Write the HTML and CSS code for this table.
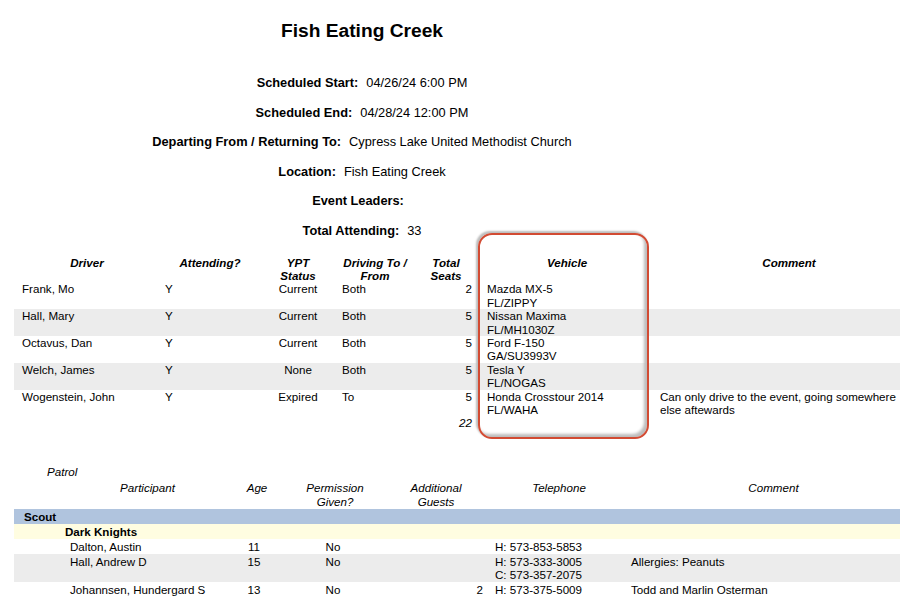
FILE: index.html
```html
<!DOCTYPE html>
<html>
<head>
<meta charset="utf-8">
<title>Fish Eating Creek</title>
<link rel="stylesheet" href="styles.css">
</head>
<body>
<div class="report">
  <h1 class="title">Fish Eating Creek</h1>
  <div class="info">
    <div class="info-row"><span class="lbl">Scheduled Start:</span><span class="val">04/26/24 6:00 PM</span></div>
    <div class="info-row"><span class="lbl">Scheduled End:</span><span class="val">04/28/24 12:00 PM</span></div>
    <div class="info-row"><span class="lbl">Departing From / Returning To:</span><span class="val">Cypress Lake United Methodist Church</span></div>
    <div class="info-row"><span class="lbl">Location:</span><span class="val">Fish Eating Creek</span></div>
    <div class="info-row"><span class="lbl">Event Leaders:</span><span class="val"></span></div>
    <div class="info-row"><span class="lbl">Total Attending:</span><span class="val">33</span></div>
  </div>

  <table class="drivers">
    <colgroup>
      <col class="d-c1"><col class="d-c2"><col class="d-c3"><col class="d-c4"><col class="d-c5"><col class="d-c6"><col class="d-c7">
    </colgroup>
    <thead>
      <tr>
        <th class="h-driver">Driver</th>
        <th>Attending?</th>
        <th>YPT<br>Status</th>
        <th>Driving To /<br>From</th>
        <th>Total<br>Seats</th>
        <th class="h-vehicle">Vehicle</th>
        <th class="h-comment">Comment</th>
      </tr>
    </thead>
    <tbody>
      <tr>
        <td class="c-name">Frank, Mo</td><td class="c-att">Y</td><td class="c-ypt">Current</td><td class="c-drv">Both</td><td class="c-seats">2</td><td class="c-veh">Mazda MX-5<br>FL/ZIPPY</td><td class="c-com"></td>
      </tr>
      <tr class="alt">
        <td class="c-name">Hall, Mary</td><td class="c-att">Y</td><td class="c-ypt">Current</td><td class="c-drv">Both</td><td class="c-seats">5</td><td class="c-veh">Nissan Maxima<br>FL/MH1030Z</td><td class="c-com"></td>
      </tr>
      <tr>
        <td class="c-name">Octavus, Dan</td><td class="c-att">Y</td><td class="c-ypt">Current</td><td class="c-drv">Both</td><td class="c-seats">5</td><td class="c-veh">Ford F-150<br>GA/SU3993V</td><td class="c-com"></td>
      </tr>
      <tr class="alt">
        <td class="c-name">Welch, James</td><td class="c-att">Y</td><td class="c-ypt">None</td><td class="c-drv">Both</td><td class="c-seats">5</td><td class="c-veh">Tesla Y<br>FL/NOGAS</td><td class="c-com"></td>
      </tr>
      <tr>
        <td class="c-name">Wogenstein, John</td><td class="c-att">Y</td><td class="c-ypt">Expired</td><td class="c-drv">To</td><td class="c-seats">5</td><td class="c-veh">Honda Crosstour 2014<br>FL/WAHA</td><td class="c-com">Can only drive to the event, going somewhere else aftewards</td>
      </tr>
      <tr class="total">
        <td></td><td></td><td></td><td></td><td class="c-seats total-num">22</td><td></td><td></td>
      </tr>
    </tbody>
  </table>

  <div class="annot"></div>

  <div class="patrol-label">Patrol</div>
  <table class="roster">
    <colgroup>
      <col class="r-c1"><col class="r-c2"><col class="r-c3"><col class="r-c4"><col class="r-c5"><col class="r-c6">
    </colgroup>
    <thead>
      <tr>
        <th class="h-part">Participant</th>
        <th>Age</th>
        <th>Permission<br>Given?</th>
        <th>Additional<br>Guests</th>
        <th>Telephone</th>
        <th class="h-rcomment">Comment</th>
      </tr>
    </thead>
    <tbody>
      <tr class="group"><td colspan="6">Scout</td></tr>
      <tr class="subgroup"><td colspan="6">Dark Knights</td></tr>
      <tr>
        <td class="r-name">Dalton, Austin</td><td class="r-age">11</td><td class="r-perm">No</td><td class="r-guests"></td><td class="r-tel">H: 573-853-5853</td><td class="r-com"></td>
      </tr>
      <tr class="alt">
        <td class="r-name">Hall, Andrew D</td><td class="r-age">15</td><td class="r-perm">No</td><td class="r-guests"></td><td class="r-tel">H: 573-333-3005<br>C: 573-357-2075</td><td class="r-com">Allergies: Peanuts</td>
      </tr>
      <tr>
        <td class="r-name">Johannsen, Hundergard S</td><td class="r-age">13</td><td class="r-perm">No</td><td class="r-guests">2</td><td class="r-tel">H: 573-375-5009</td><td class="r-com">Todd and Marlin Osterman</td>
      </tr>
    </tbody>
  </table>
</div>
</body>
</html>
```

FILE: styles.css
```css
html, body {
  margin: 0;
  padding: 0;
  background: #ffffff;
  overflow: hidden;
}

body {
  font-family: "Liberation Sans", Arial, sans-serif;
  color: #000;
  font-size: 11.6px;
}

.report {
  position: relative;
  width: 900px;
  height: 596px;
  padding-top: 20px;
  box-sizing: border-box;
}

.title {
  width: 724px;
  margin: 0;
  font-size: 19.2px;
  line-height: 22px;
  font-weight: bold;
  text-align: center;
}

.info {
  width: 724px;
  margin-top: 26px;
}

.info-row {
  height: 29.6px;
  line-height: 29.6px;
  font-size: 12.8px;
  text-align: center;
  white-space: nowrap;
}

.info-row .lbl {
  font-weight: bold;
}

.info-row .val {
  margin-left: 8px;
}

/* Drivers table */
table {
  border-collapse: collapse;
  border-spacing: 0;
  table-layout: fixed;
  margin-left: 14px;
  width: 886px;
}

td, th {
  padding: 0;
  vertical-align: top;
}

.drivers {
  margin-top: 10px;
  line-height: 13.4px;
}

.d-c1 { width: 146px; }
.d-c2 { width: 100px; }
.d-c3 { width: 76px; }
.d-c4 { width: 78px; }
.d-c5 { width: 64px; }
.d-c6 { width: 178px; }
.d-c7 { width: 244px; }

.drivers th {
  font-weight: bold;
  font-style: italic;
  text-align: center;
  height: 26.8px;
}

.drivers th.h-comment {
  padding-left: 22px;
}

.drivers tbody tr {
  height: 26.8px;
}

.drivers tbody tr.total {
  height: 13.4px;
}

.alt td {
  background: #ececec;
}

.c-name { padding-left: 8px; }
.c-att { padding-left: 5px; }
.c-ypt { text-align: center; }
.c-drv { padding-left: 6px; }
.c-seats { text-align: right; padding-right: 6px; }
.c-veh { padding-left: 9px; }
.c-com { padding-left: 4px; }

.total-num {
  font-style: italic;
}

/* Annotation highlight */
.annot {
  position: absolute;
  left: 478px;
  top: 233px;
  width: 171px;
  height: 206px;
  box-sizing: border-box;
  border: 2px solid #d24b33;
  border-radius: 14px;
  box-shadow: -2px -2px 2px #bdbdbd, inset -3px -3px 3px #bcbcbc;
  pointer-events: none;
}

/* Roster table */
.patrol-label {
  margin-top: 35px;
  padding-left: 47px;
  font-style: italic;
  line-height: 14px;
}

.roster {
  margin-top: 2px;
  line-height: 13.5px;
}

.r-c1 { width: 211px; }
.r-c2 { width: 64px; }
.r-c3 { width: 92px; }
.r-c4 { width: 110px; }
.r-c5 { width: 136px; }
.r-c6 { width: 273px; }

.roster th {
  font-weight: normal;
  font-style: italic;
  text-align: center;
  line-height: 14px;
  height: 28px;
}

.roster th.h-part {
  padding-left: 56px;
}

.roster th.h-rcomment {
  padding-left: 20px;
}

.roster tbody td {
  padding-top: 1px;
  padding-bottom: 0.5px;
}

.roster .group td {
  background: #b0c4de;
  font-weight: bold;
  padding-left: 10px;
}

.roster .subgroup td {
  background: #fffde1;
  font-weight: bold;
  padding-left: 51px;
}

.r-name { padding-left: 56px; }
.r-age { text-align: center; padding-right: 6px; }
.r-perm { text-align: center; padding-right: 4px; }
.r-guests { text-align: right; padding-right: 8px; }
.roster tbody td.r-tel { padding-left: 4px; }
.roster tbody td.r-com { padding-left: 4px; }
```
